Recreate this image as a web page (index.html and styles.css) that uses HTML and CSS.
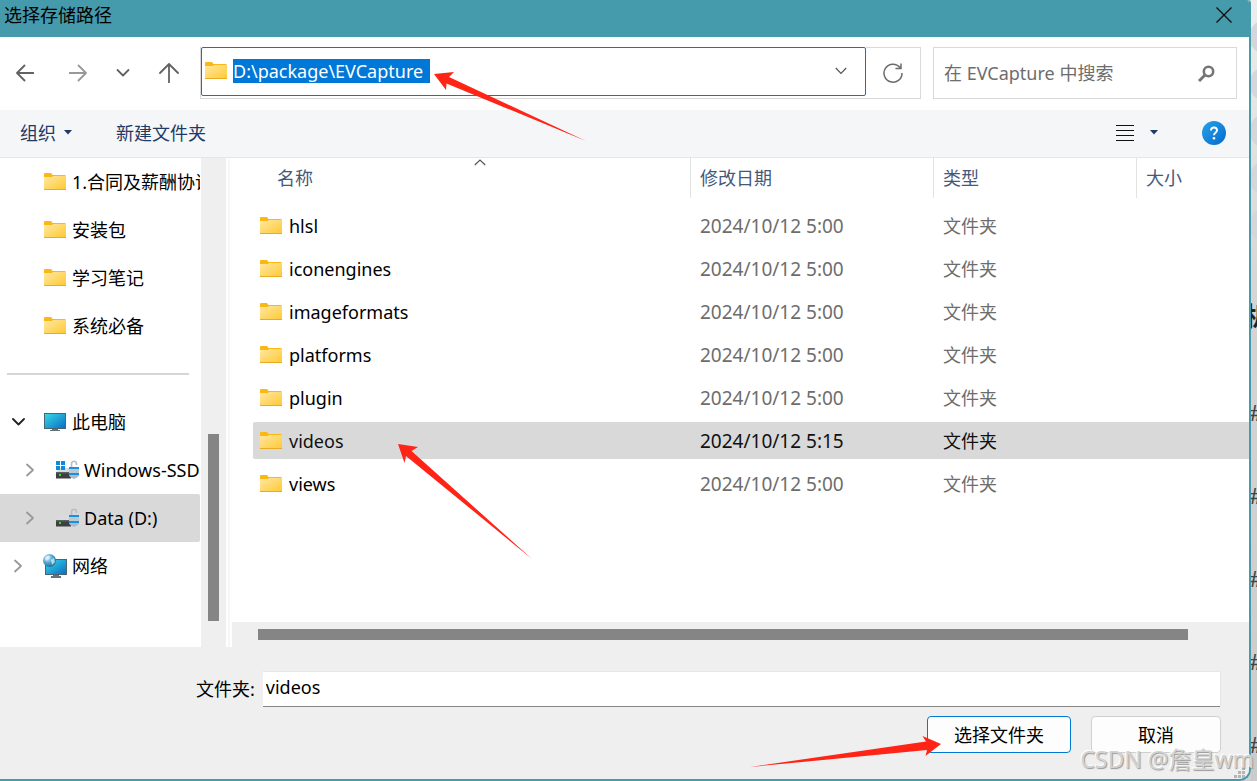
FILE: index.html
```html
<!DOCTYPE html>
<html lang="zh-CN">
<head>
<meta charset="utf-8">
<title>选择存储路径</title>
<link rel="stylesheet" href="styles.css">
</head>
<body>
<svg class="defs" width="0" height="0" aria-hidden="true">
  <defs>
    <linearGradient id="gFolder" x1="0" y1="0" x2="1" y2="1"><stop offset="0" stop-color="#ffe8a3"/><stop offset="1" stop-color="#ffc934"/></linearGradient>
    <linearGradient id="gScreen" x1="0" y1="0" x2="1" y2="1"><stop offset="0" stop-color="#35d8e6"/><stop offset="1" stop-color="#0b6fc4"/></linearGradient>
    <linearGradient id="gHelp" x1="0" y1="0" x2="1" y2="1"><stop offset="0" stop-color="#25a4ea"/><stop offset="1" stop-color="#0569cd"/></linearGradient>
    <radialGradient id="gGlobe" cx=".35" cy=".3" r=".8"><stop offset="0" stop-color="#d3f0fa"/><stop offset=".5" stop-color="#4fa3cf"/><stop offset="1" stop-color="#1c5d94"/></radialGradient>
    <symbol id="folder" viewBox="0 0 22 17">
      <path d="M0 1Q0 0 1 0H7L8.500 2H21.500V5H0Z" fill="#fbb713"/>
      <path d="M0 4H8L9 3H22V16.500H0Z" fill="url(#gFolder)"/>
      <path d="M0 16.500H22" stroke="#e9aa24"/>
    </symbol>
    <symbol id="drive" viewBox="0 0 24 20">
      <path d="M4 8H15V12H0Z" fill="#d9dcdf"/>
      <path d="M0 12H15V18.500H0Z" fill="#3d3f41"/>
      <path d="M0 12H15V13.500H0Z" fill="#5d6063"/>
      <path d="M3 14H5V16H3Z" fill="#2be02b"/>
      <path d="M15.500 7V4Q15.500 1.200 18 1.200T20.500 4V5" fill="none" stroke="#b5bec6" stroke-width="1.600"/>
      <path d="M13 7H23V15Q23 17 18 19Q13 17 13 15Z" fill="#aebac4"/>
      <path d="M13 7H23V9H13ZM13 13H23V15H13Z" fill="#1a91e0"/>
      <path d="M13 9H23V13H13Z" fill="#bcc8d2"/>
    </symbol>
  </defs>
</svg>

<div class="desktop">
  <main class="dialog">
    <header class="titlebar">
      <h1 class="title">选择存储路径</h1>
      <button class="close" aria-label="关闭"><svg width="16" height="16" viewBox="0 0 16 16"><path d="M.5.500 15.500 15.500M15.500.500.500 15.500" stroke="#111" stroke-width="1.400"/></svg></button>
    </header>

    <nav class="navbar">
      <div class="nav-buttons">
        <button class="back" aria-label="后退"><svg width="18" height="18" viewBox="0 0 18 18"><path d="M17.500 9H1M8.500 1.500 1 9l7.500 7.500" class="line dark"/></svg></button>
        <button aria-label="前进"><svg width="18" height="18" viewBox="0 0 18 18"><path d="M.5 9H17M9.500 1.500 17 9l-7.500 7.500" class="line pale"/></svg></button>
        <button aria-label="最近位置"><svg width="14" height="18" viewBox="0 0 14 18"><path d="M1.500 6 7 11.500 12.500 6" class="line dark"/></svg></button>
        <button aria-label="上移"><svg width="20" height="20" viewBox="0 0 20 20"><path d="M10 19.500V1M1 10l9-9 9 9" class="line dark"/></svg></button>
      </div>
      <div class="address">
        <div class="address-edit">
          <svg width="22" height="17"><use href="#folder"/></svg>
          <input class="path" type="text" aria-label="地址" value="D:\package\EVCapture">
          <button class="drop" aria-label="历史记录"><svg width="12" height="8" viewBox="0 0 12 8"><path d="M.8 1 6 6.500 11.200 1" fill="none" stroke="#555" stroke-width="1.200"/></svg></button>
        </div>
        <button class="refresh" aria-label="刷新"><svg width="20" height="20" viewBox="0 0 20 20"><path d="M17 4.500A9 9 0 1 0 19 10M18 .500V5.500H12.500" fill="none" stroke="#6b6b6b" stroke-width="1.500"/></svg></button>
      </div>
      <div class="search">
        <input type="text" aria-label="搜索" placeholder="在 EVCapture 中搜索">
        <svg width="17" height="17" viewBox="0 0 17 17"><circle cx="10.500" cy="6.500" r="4.700" fill="none" stroke="#757575" stroke-width="2.600"/><path d="M7.500 9.500 1 16" stroke="#757575" stroke-width="3"/></svg>
      </div>
    </nav>

    <div class="toolbar">
      <button class="tool">组织 <svg width="8" height="5" viewBox="0 0 8 5"><path d="M0 0H8L4 4.500Z" fill="#1e3a66"/></svg></button>
      <button class="tool">新建文件夹</button>
      <span class="spacer"></span>
      <button class="view" aria-label="更改视图"><svg width="18" height="16" viewBox="0 0 18 16" shape-rendering="crispEdges"><path d="M0 .500H18M0 5.500H18M0 10.500H18M0 15.500H18" stroke="#111"/></svg></button>
      <button class="view-more" aria-label="更多选项"><svg width="8" height="5" viewBox="0 0 8 5"><path d="M0 0H8L4 4.500Z" fill="#1e3a66"/></svg></button>
      <button class="help" aria-label="帮助"><svg width="24" height="24" viewBox="0 0 24 24"><circle cx="12" cy="12" r="12" fill="url(#gHelp)"/><path d="M9 9.500Q9 6.500 12 6.500T15 9.300Q15 10.700 13.500 11.700T12 14.200" fill="none" stroke="#fff" stroke-width="1.900"/><circle cx="12" cy="17.300" r="1.300" fill="#fff"/></svg></button>
    </div>

    <div class="content">
      <aside class="sidebar">
        <ul class="tree">
          <li><svg class="ico" width="22" height="18" viewBox="0 0 22 18"><use href="#folder" width="22" height="17"/></svg>1.合同及薪酬协议</li>
          <li><svg class="ico" width="22" height="18" viewBox="0 0 22 18"><use href="#folder" width="22" height="17"/></svg>安装包</li>
          <li><svg class="ico" width="22" height="18" viewBox="0 0 22 18"><use href="#folder" width="22" height="17"/></svg>学习笔记</li>
          <li><svg class="ico" width="22" height="18" viewBox="0 0 22 18"><use href="#folder" width="22" height="17"/></svg>系统必备</li>
          <li class="rule" role="separator"></li>
          <li><svg class="chev" width="13" height="12" viewBox="0 0 13 12"><path d="M1 3 6.500 8.500 12 3" class="line black"/></svg><svg class="ico" width="22" height="20" viewBox="0 0 22 20"><path d="M0 1H22V17H0Z" fill="#4b6473"/><path d="M1 2H21V16H1Z" fill="url(#gScreen)"/><path d="M8 17H14V18H16V19H6V18H8Z" fill="#66727a"/></svg>此电脑</li>
          <li class="child"><svg class="chev" width="13" height="14" viewBox="0 0 13 14"><path d="M3 1.500 9 7 3 12.500" class="line pale"/></svg><svg class="ico" width="24" height="20" viewBox="0 0 24 20"><use href="#drive" width="24" height="20"/><path d="M0 1H4V5H0ZM5 1H9V5H5ZM0 6H4V10H0ZM5 6H9V10H5Z" fill="#0a8de0"/></svg>Windows-SSD (C:)</li>
          <li class="child current"><svg class="chev" width="13" height="14" viewBox="0 0 13 14"><path d="M3 1.500 9 7 3 12.500" class="line pale"/></svg><svg class="ico" width="24" height="20"><use href="#drive"/></svg>Data (D:)</li>
          <li><svg class="chev" width="13" height="14" viewBox="0 0 13 14"><path d="M3 1.500 9 7 3 12.500" class="line pale"/></svg><svg class="ico" width="24" height="24" viewBox="0 0 24 24"><path d="M2 5H24V21H2Z" fill="#4b6473"/><path d="M3 6H23V20H3Z" fill="url(#gScreen)"/><path d="M10 21H16V22H18V24H8V22H10Z" fill="#66727a"/><circle cx="6.500" cy="6.500" r="6.500" fill="url(#gGlobe)"/><path d="M2 4Q4 1 7 2L6 5 3 7ZM8 6 11 4 12 8 9 11Z" fill="#e4f5fb" opacity=".7"/></svg>网络</li>
        </ul>
        <div class="vscroll"><div class="thumb"></div></div>
      </aside>

      <section class="files">
        <table class="list">
          <colgroup><col><col class="c-date"><col class="c-type"><col class="c-size"></colgroup>
          <thead>
            <tr>
              <th class="name"><span>名称</span><svg class="sort" width="12" height="7" viewBox="0 0 12 7"><path d="M.8 6 6 1 11.200 6" fill="none" stroke="#555" stroke-width="1.200"/></svg></th>
              <th><span>修改日期</span></th><th><span>类型</span></th><th><span>大小</span></th>
            </tr>
          </thead>
          <tbody>
            <tr><td><svg width="22" height="17"><use href="#folder"/></svg>hlsl</td><td class="date">2024/10/12 5:00</td><td>文件夹</td><td></td></tr>
            <tr><td><svg width="22" height="17"><use href="#folder"/></svg>iconengines</td><td class="date">2024/10/12 5:00</td><td>文件夹</td><td></td></tr>
            <tr><td><svg width="22" height="17"><use href="#folder"/></svg>imageformats</td><td class="date">2024/10/12 5:00</td><td>文件夹</td><td></td></tr>
            <tr><td><svg width="22" height="17"><use href="#folder"/></svg>platforms</td><td class="date">2024/10/12 5:00</td><td>文件夹</td><td></td></tr>
            <tr><td><svg width="22" height="17"><use href="#folder"/></svg>plugin</td><td class="date">2024/10/12 5:00</td><td>文件夹</td><td></td></tr>
            <tr class="selected"><td><svg width="22" height="17"><use href="#folder"/></svg>videos</td><td class="date">2024/10/12 5:15</td><td>文件夹</td><td></td></tr>
            <tr><td><svg width="22" height="17"><use href="#folder"/></svg>views</td><td class="date">2024/10/12 5:00</td><td>文件夹</td><td></td></tr>
          </tbody>
        </table>
        <div class="hscroll"><div class="thumb"></div></div>
      </section>
    </div>

    <footer class="footer">
      <div class="field">
        <label for="folder-name">文件夹:</label>
        <input id="folder-name" type="text" value="videos">
      </div>
      <div class="actions">
        <button class="btn primary">选择文件夹</button>
        <button class="btn">取消</button>
      </div>
      <svg class="grip" width="12" height="12" viewBox="0 0 12 12"><path d="M8 0h3v3H8zM4 4h3v3H4zM8 4h3v3H8zM0 8h3v3H0zM4 8h3v3H4zM8 8h3v3H8z" fill="#b5b5b5"/></svg>
    </footer>
  </main>

  <div class="behind">
    <i class="dot"></i><i class="dot"></i><i class="dot"></i><i class="dot"></i><i class="dot"></i>
    <b>机</b>
    <span>#</span><span>#</span><span>#</span><span>#</span><span>#</span>
  </div>

  <svg class="arrow arrow-path" width="152" height="70" viewBox="0 0 152 70"><path d="M0 2 20 0 15 5 152 69 12.500 11.500 12 18Z"/></svg>
  <svg class="arrow arrow-row" width="134" height="116" viewBox="0 0 134 116"><path d="M0 0 20 3 13.500 7 134 115 8 12 6.500 19Z"/></svg>
  <svg class="arrow arrow-button" width="191" height="32" viewBox="0 0 191 32"><path d="M191 8 172.500 0 176 5.500 0 31 177 14 175.500 20Z"/></svg>
  <div class="watermark">CSDN @詹皇wm</div>
</div>
</body>
</html>
```
FILE: styles.css
```css
* { box-sizing: border-box; }

body {
  margin: 0;
  font-family: "Noto Sans", "Noto Sans CJK SC", sans-serif;
  font-size: 18px;
  line-height: 24px;
  color: #000;
}

button, input { font: inherit; color: inherit; }
button { border: 0; padding: 0; background: none; display: flex; align-items: center; justify-content: center; }
input { border: 0; padding: 0; outline: 0; min-width: 0; background: none; }
svg { flex: none; display: block; }
.defs { position: absolute; }

.line { fill: none; stroke-width: 1.8; stroke-linecap: round; stroke-linejoin: round; }
.dark { stroke: #626262; }
.pale { stroke: #999; }
.black { stroke: #222; }

.desktop { position: relative; display: flex; min-height: 100vh; overflow: hidden; background: #d0d0d0; }

.dialog {
  flex: 1;
  min-width: 0;
  display: flex;
  flex-direction: column;
  border: solid #459aab;
  border-width: 0 2px 2px 0;
  border-radius: 0 4px 12px 0;
  overflow: hidden;
  background: #fff;
}

.titlebar { display: flex; justify-content: space-between; height: 37px; padding: 3px 17px 0 4px; background: #459aab; }
.title { margin: 0; font-size: 18px; font-weight: 400; }
.close { height: 24px; }

.navbar { display: flex; height: 73px; padding: 10px 12px 11px 16px; }
.nav-buttons { display: flex; align-items: center; gap: 29px; margin-right: 21px; }
.back { margin-right: 6px; }
.address { flex: 1; display: flex; border: 1px solid #d9d9d9; border-top: 0; }
.address-edit { flex: 1; display: flex; align-items: center; height: 49px; padding: 0 18px 2px 3px; border: 1px solid #0f74ca; border-radius: 2px; }
.address-edit svg { margin-right: 6px; }
.path { width: 197px; height: 24px; background: #0078d7; color: #fff; line-height: 24px; }
.drop { margin-left: auto; }
.drop svg { margin: 0; }
.refresh { width: 54px; border-top: 1px solid #d9d9d9; }
.search { display: flex; align-items: center; width: 304px; margin-left: 12px; padding: 0 21px 0 10px; border: 1px solid #d9d9d9; }
.search input { flex: 1; }
.search input::placeholder { color: #6d6d6d; opacity: 1; }

.toolbar { display: flex; align-items: center; height: 48px; padding: 0 23px 2px 20px; background: #f4f6f8; border-bottom: 1px solid #e4e6e8; color: #1e3a66; }
.tool { gap: 8px; margin-right: 44px; }
.spacer { flex: 1; }
.view { margin-right: 16px; }
.view-more { margin-right: 44px; }

.content { flex: 1; display: flex; min-height: 0; }
.sidebar { display: flex; width: 230px; border-right: 2px solid #f7f7f7; }
.tree { flex: 1; min-width: 0; margin: 0; padding: 0; list-style: none; overflow: hidden; }
.tree li { position: relative; display: flex; align-items: center; height: 48px; padding-left: 43px; white-space: nowrap; overflow: hidden; margin-right: 1px; }
.tree .ico { width: 24px; margin-right: 5px; }
.tree .chev { position: absolute; left: 12px; }
.tree .child { padding-left: 56px; }
.tree .child .ico { margin-right: 4px; }
.tree .child .chev { left: 24px; }
.tree .rule { padding: 0; }
.tree .rule::before { content: ""; flex: 1; height: 2px; margin: 0 11px 0 7px; background: #d6d6d6; }
.tree .current { background: #d9d9d9; border-radius: 0 2px 2px 0; }
.vscroll { width: 25px; margin-right: 2px; padding: 276px 7px 26px; background: #efefef; }
.thumb { background: #858585; }
.vscroll .thumb { height: 100%; }

.files { flex: 1; min-width: 0; display: flex; flex-direction: column; justify-content: space-between; }
.list { width: calc(100% - 23px); margin-left: 23px; table-layout: fixed; border-collapse: separate; border-spacing: 0; }
.c-date { width: 243px; }
.c-type { width: 203px; }
.c-size { width: 113px; }
.list th { position: relative; height: 46px; padding: 0; text-align: left; vertical-align: top; font-weight: 400; color: #44597a; }
.list th span { display: block; height: 40px; padding: 8px 0 0 9px; border-left: 1px solid #e2e2e2; }
.list th.name span { padding-left: 23px; border-color: transparent; }
.sort { position: absolute; top: 1px; left: 50%; margin-left: 2px; }
.list td { height: 43px; padding: 0 0 0 10px; border: solid transparent; border-width: 3px 0; background-clip: padding-box; color: #6d6d6d; }
.list td.date { font-size: 19px; }
.list td:first-child { padding-left: 7px; color: #000; border-radius: 4px 0 0 4px; }
.list td svg { display: inline-block; margin-right: 7px; vertical-align: -1px; }
.list .selected td { background-color: #d9d9d9; color: #111; }
.hscroll { height: 25px; margin-left: 2px; padding: 7px 61px 7px 26px; background: #efefef; }
.hscroll .thumb { height: 11px; }

.footer { position: relative; padding: 24px 28px 26px 196px; background: #efefef; }
.field { display: flex; align-items: center; gap: 8px; }
.field input { flex: 1; height: 36px; padding: 0 3px 6px; background: #fff; border: solid #e6e6e6; border-width: 1px 1px 0 0; box-shadow: inset 0 -1px #858585; }
.actions { display: flex; justify-content: flex-end; gap: 20px; margin-top: 9px; }
.btn { width: 130px; height: 37px; border: 1px solid #d0d0d0; border-radius: 4px; background: #fdfdfd; }
.btn.primary { width: 144px; border-color: #0078d4; }
.grip { position: absolute; right: 3px; bottom: 0; }

.behind { width: 6px; overflow: hidden; padding-top: 20px; background: linear-gradient(#ededed, #d4d4d4 40%, #cbcbcb); color: #444; }
.behind .dot { display: block; width: 34px; height: 34px; margin: 0 0 13px -2px; border-radius: 50%; background: #d4d6dc; }
.behind b { display: block; height: 24px; margin: 62px 0 72px -7px; font-size: 26px; color: #222; }
.behind span { display: block; height: 24px; margin: 0 0 59px -2px; font-size: 22px; }
.behind span:last-child { margin-bottom: 0; }

.arrow { position: absolute; fill: #ff2416; pointer-events: none; }
.arrow-path { left: 434px; top: 72px; }
.arrow-row { left: 398px; top: 444px; }
.arrow-button { right: 316px; bottom: 13px; }

.watermark { position: absolute; right: 3px; bottom: 7px; font-size: 23px; line-height: 30px; white-space: nowrap; color: #d2d2d2; text-shadow: 1px 1px 1px #999, -1px -1px 1px #fff; }
```
